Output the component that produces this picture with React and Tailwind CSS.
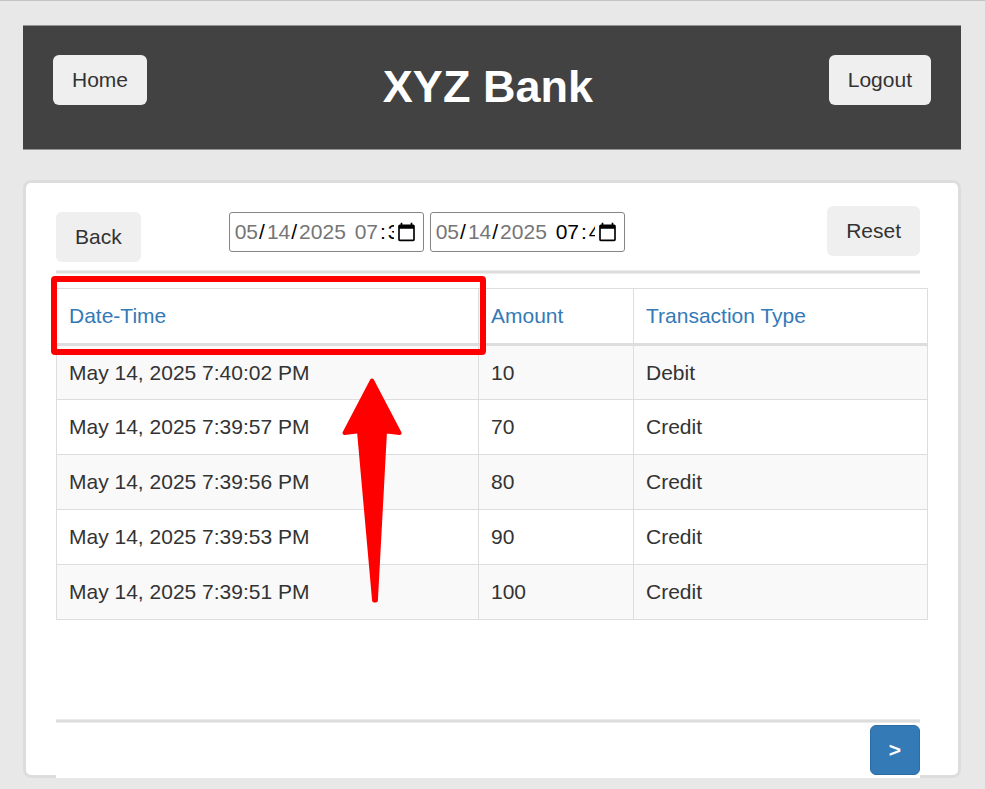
const transactions = [
  { date: "May 14, 2025 7:40:02 PM", amount: 10, type: "Debit" },
  { date: "May 14, 2025 7:39:57 PM", amount: 70, type: "Credit" },
  { date: "May 14, 2025 7:39:56 PM", amount: 80, type: "Credit" },
  { date: "May 14, 2025 7:39:53 PM", amount: 90, type: "Credit" },
  { date: "May 14, 2025 7:39:51 PM", amount: 100, type: "Credit" },
];

const columns = ["Date-Time", "Amount", "Transaction Type"];

function GreyButton({ children }) {
  return (
    <button type="button" className="h-[50px] shrink-0 rounded-md bg-[#efefef] px-[19px] text-[#333]">
      {children}
    </button>
  );
}

// The native field keeps its picker; its own digits are hidden behind the formatted text.
function DateField({ label, value, hour, minute, hourLocked }) {
  return (
    <div className="relative">
      <input
        type="datetime-local"
        aria-label={label}
        defaultValue={value}
        className="block h-10 w-[195px] rounded-[3px] border border-[#858585] bg-white px-1 text-black [&::-webkit-datetime-edit]:opacity-0"
      />
      <div
        aria-hidden="true"
        className="pointer-events-none absolute inset-y-0 left-[5px] flex w-[160px] items-center overflow-hidden whitespace-pre text-black"
      >
        <span className="px-px text-[#757575]">05</span>
        <span className="pr-px">/</span>
        <span className="px-px text-[#757575]">14</span>
        <span className="pr-px">/</span>
        <span className="px-px text-[#757575]">2025</span>
        <span className="pr-px"> </span>
        <span className={hourLocked ? "px-px text-[#757575]" : "px-px"}>{hour}</span>
        <span className="px-px">:</span>
        <span className="px-px">{minute}</span>
      </div>
    </div>
  );
}

function Divider() {
  return <hr className="h-1 border-y border-[#ebebeb] bg-[#ddd]" />;
}

function Highlight() {
  return (
    <>
      <div className="pointer-events-none absolute -left-[5px] -top-3 h-[79px] w-[435px] rounded-[4px] border-[6px] border-[#ff0000]" />
      <svg
        className="pointer-events-none absolute left-[284px] top-[87px]"
        width="64"
        height="230"
        viewBox="340 375 64 230"
        aria-hidden="true"
      >
        <path
          d="M372 380.500 L399.500 433 L385 431.200 L375.900 600.500 H374.100 L359 431.200 L344.500 433 Z"
          fill="#ff0000"
          stroke="#ff0000"
          strokeWidth="4"
          strokeLinejoin="round"
        />
      </svg>
    </>
  );
}

export default function App() {
  return (
    <div className="min-h-screen border-t border-[#c3c3c3] bg-[#e8e8e8] pb-2.5 pl-[23px] pr-6 pt-6 font-['Liberation_Sans',Arial,sans-serif] text-[21px] leading-[30px] text-[#333]">
      <header className="flex items-start justify-between border-y border-[#939393] bg-[#424242] px-[30px] pb-[30px] pt-[29px]">
        <GreyButton>Home</GreyButton>
        <h1 className="text-[45px] font-bold leading-[64px] text-white">XYZ Bank</h1>
        <GreyButton>Logout</GreyButton>
      </header>

      <main className="mt-[30px] rounded-lg border-[3px] border-[#ddd] bg-white pl-[30px] pr-[38px] pt-[23px]">
        <div className="flex items-start justify-between pb-2">
          <div className="pt-1.5">
            <GreyButton>Back</GreyButton>
          </div>
          <div className="ml-[88px] mr-auto flex gap-1.5 pt-1.5">
            <DateField label="Start date" value="2025-05-14T19:38" hour="07" minute="38" hourLocked />
            <DateField label="End date" value="2025-05-14T19:42" hour="07" minute="42" />
          </div>
          <GreyButton>Reset</GreyButton>
        </div>
        <Divider />

        <div className="relative -mr-2 mt-3.5">
          <table className="w-full table-fixed border-collapse text-left">
            <colgroup>
              <col className="w-[422px]" />
              <col className="w-[155px]" />
              <col />
            </colgroup>
            <thead>
              <tr className="h-14">
                {columns.map((name) => (
                  <th key={name} className="border border-b-[3px] border-[#ddd] px-3 font-normal">
                    <a href="#" className="text-[#337ab7]">{name}</a>
                  </th>
                ))}
              </tr>
            </thead>
            <tbody>
              {transactions.map((row) => (
                <tr key={row.date} className="h-[55px] odd:bg-[#f9f9f9]">
                  <td className="border border-[#ddd] px-3">{row.date}</td>
                  <td className="border border-[#ddd] px-3">{row.amount}</td>
                  <td className="border border-[#ddd] px-3">{row.type}</td>
                </tr>
              ))}
            </tbody>
          </table>
          <Highlight />
        </div>

        {/* The pager strip hangs over the panel's lower border. */}
        <footer className="relative -mb-[3px] mt-[99px] bg-white pb-[3px]">
          <Divider />
          <div className="flex justify-end pt-0.5">
            <button
              type="button"
              aria-label="Next page"
              className="size-[50px] rounded-md border border-[#2e6da4] bg-[#337ab7] font-bold text-white"
            >
              &gt;
            </button>
          </div>
        </footer>
      </main>
    </div>
  );
}
